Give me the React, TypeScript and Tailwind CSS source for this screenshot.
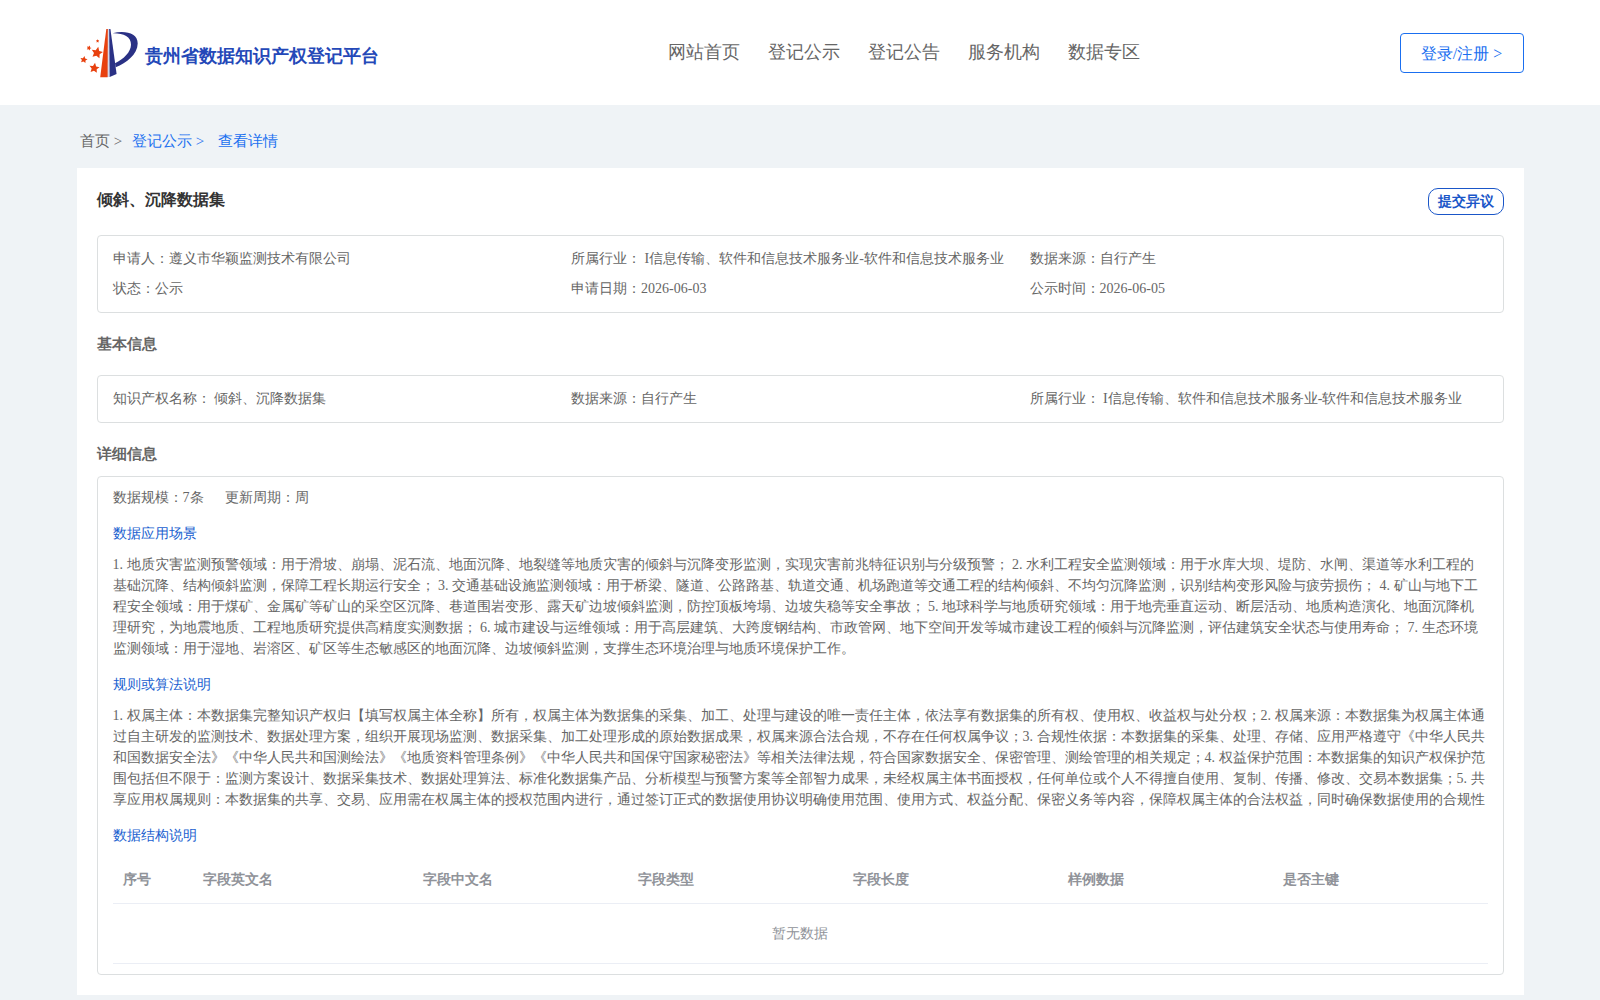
import React from "react";

const navItems = ["网站首页", "登记公示", "登记公告", "服务机构", "数据专区"];

const summary = [
  "申请人：遵义市华颖监测技术有限公司",
  "所属行业： I信息传输、软件和信息技术服务业-软件和信息技术服务业",
  "数据来源：自行产生",
  "状态：公示",
  "申请日期：2026-06-03",
  "公示时间：2026-06-05",
];

const basics = [
  "知识产权名称： 倾斜、沉降数据集",
  "数据来源：自行产生",
  "所属行业： I信息传输、软件和信息技术服务业-软件和信息技术服务业",
];

const sceneLines = [
  "1. 地质灾害监测预警领域：用于滑坡、崩塌、泥石流、地面沉降、地裂缝等地质灾害的倾斜与沉降变形监测，实现灾害前兆特征识别与分级预警； 2. 水利工程安全监测领域：用于水库大坝、堤防、水闸、渠道等水利工程的",
  "基础沉降、结构倾斜监测，保障工程长期运行安全； 3. 交通基础设施监测领域：用于桥梁、隧道、公路路基、轨道交通、机场跑道等交通工程的结构倾斜、不均匀沉降监测，识别结构变形风险与疲劳损伤； 4. 矿山与地下工",
  "程安全领域：用于煤矿、金属矿等矿山的采空区沉降、巷道围岩变形、露天矿边坡倾斜监测，防控顶板垮塌、边坡失稳等安全事故； 5. 地球科学与地质研究领域：用于地壳垂直运动、断层活动、地质构造演化、地面沉降机",
  "理研究，为地震地质、工程地质研究提供高精度实测数据； 6. 城市建设与运维领域：用于高层建筑、大跨度钢结构、市政管网、地下空间开发等城市建设工程的倾斜与沉降监测，评估建筑安全状态与使用寿命； 7. 生态环境",
  "监测领域：用于湿地、岩溶区、矿区等生态敏感区的地面沉降、边坡倾斜监测，支撑生态环境治理与地质环境保护工作。",
];

const ruleLines = [
  "1. 权属主体：本数据集完整知识产权归【填写权属主体全称】所有，权属主体为数据集的采集、加工、处理与建设的唯一责任主体，依法享有数据集的所有权、使用权、收益权与处分权；2. 权属来源：本数据集为权属主体通",
  "过自主研发的监测技术、数据处理方案，组织开展现场监测、数据采集、加工处理形成的原始数据成果，权属来源合法合规，不存在任何权属争议；3. 合规性依据：本数据集的采集、处理、存储、应用严格遵守《中华人民共",
  "和国数据安全法》《中华人民共和国测绘法》《地质资料管理条例》《中华人民共和国保守国家秘密法》等相关法律法规，符合国家数据安全、保密管理、测绘管理的相关规定；4. 权益保护范围：本数据集的知识产权保护范",
  "围包括但不限于：监测方案设计、数据采集技术、数据处理算法、标准化数据集产品、分析模型与预警方案等全部智力成果，未经权属主体书面授权，任何单位或个人不得擅自使用、复制、传播、修改、交易本数据集；5. 共",
  "享应用权属规则：本数据集的共享、交易、应用需在权属主体的授权范围内进行，通过签订正式的数据使用协议明确使用范围、使用方式、权益分配、保密义务等内容，保障权属主体的合法权益，同时确保数据使用的合规性",
];

const columns = ["字段英文名", "字段中文名", "字段类型", "字段长度", "样例数据", "是否主键"];

function Star({ x, y, r, a }: { x: number; y: number; r: number; a: number }) {
  return (
    <path
      transform={`translate(${x} ${y}) rotate(${a}) scale(${r})`}
      d="M0-1 .3-.36 .95-.31 .48.16 .59.81 0 .5-.59.81-.48.16-.95-.31-.3-.36Z"
    />
  );
}

function Logo() {
  return (
    <svg className="h-[50px] w-[60px] shrink-0" viewBox="0 0 60 50">
      <path d="M28 1h3v48h-3Z" fill="#d5d8e8" />
      <g fill="#e8410f">
        <path d="M27.3 1h1.5L28.6 49.2h-7.4Z" />
        <Star x={4.8} y={31.7} r={3.8} a={10} />
        <Star x={10} y={20} r={2.6} a={20} />
        <Star x={18.6} y={13} r={1.8} a={0} />
        <Star x={18} y={24.7} r={6} a={12} />
        <Star x={15.3} y={40.1} r={5.3} a={8} />
      </g>
      <g fill="#2a3185">
        <path d="M30.2 1h1.2L37.6 45.9 30.7 49Z" />
        <path d="M33.5 5.3C46 2.2 58.8 5 58.7 15.6 58.5 26.5 47.5 35 36.7 39.3L36 35.2C45 31 51.8 24 52 16.8 52.2 8.5 44 5 33.5 5.3Z" />
      </g>
    </svg>
  );
}

function Lines({ lines }: { lines: string[] }) {
  return (
    <div className="mt-[10px] whitespace-nowrap">
      {lines.map((l) => (
        <p key={l}>{l}</p>
      ))}
    </div>
  );
}

export default function App() {
  return (
    <div className="h-[1000px] w-[1600px] overflow-hidden bg-[#eff3f6] font-['Liberation_Serif',serif] text-sm leading-[21px] text-[#666]">
      <header className="flex h-[105px] items-start bg-white pr-[76px] pl-[79px]">
        <div className="mt-[28px] flex w-[589px] shrink-0 items-center">
          <Logo />
          <h1 className="ml-[6px] pt-[5px] text-lg font-bold text-[#2448b8]">贵州省数据知识产权登记平台</h1>
        </div>
        <nav className="mt-[38px] flex gap-7 text-lg leading-7 whitespace-nowrap">
          {navItems.map((n) => (
            <a key={n}>{n}</a>
          ))}
        </nav>
        <button className="mt-[33px] ml-auto h-10 w-[124px] rounded border border-[#1a6ff0] pt-[2px] pr-px text-base text-[#1a6ff0]">
          登录/注册 &gt;
        </button>
      </header>

      <div className="flex h-[63px] items-center pt-[9px] pl-20 text-[15px]">
        <span>首页 &gt;</span>
        <span className="ml-[9.7px] text-[#1a70f0]">登记公示 &gt;</span>
        <span className="ml-[14px] text-[#1a70f0]">查看详情</span>
      </div>

      <main className="mx-[76.5px] h-[827px] bg-white px-5 pt-5">
        <div className="flex h-[47px] items-start justify-between">
          <h2 className="text-base leading-6 font-bold text-[#333]">倾斜、沉降数据集</h2>
          <button className="h-[27px] w-[76px] rounded-[10px] border border-[#1a56c8] text-sm font-bold text-[#1a56c8]">
            提交异议
          </button>
        </div>
        <div className="grid h-[78px] grid-cols-[458.6px_458.5px_1fr] content-start gap-y-[9px] rounded border border-[#dcdfe0] pt-3 pl-[15px] whitespace-nowrap">
          {summary.map((s) => (
            <span key={s}>{s}</span>
          ))}
        </div>
        <h3 className="flex h-[62px] items-center text-[15px] font-bold">基本信息</h3>
        <div className="grid h-12 grid-cols-[458.6px_458.5px_1fr] content-start rounded border border-[#dcdfe0] pt-3 pl-[15px] whitespace-nowrap">
          {basics.map((s) => (
            <span key={s}>{s}</span>
          ))}
        </div>
        <h3 className="flex h-[53px] items-center pt-[9px] text-[15px] font-bold">详细信息</h3>
        <section className="h-[499px] rounded border border-[#dcdfe0] px-[15px] pt-[10px]">
          <div className="flex gap-[21px]">
            <span>数据规模：7条</span>
            <span>更新周期：周</span>
          </div>
          <h4 className="mt-[15px] text-[#1a5fd0]">数据应用场景</h4>
          <Lines lines={sceneLines} />
          <h4 className="mt-[15px] text-[#1a5fd0]">规则或算法说明</h4>
          <Lines lines={ruleLines} />
          <h4 className="mt-[15px] text-[#1a5fd0]">数据结构说明</h4>
          <div className="mt-[10px] text-[#909399]">
            <div className="flex h-12 items-center border-b border-[#ebeef5] pl-[10px] font-bold">
              <span className="w-20 shrink-0">序号</span>
              {columns.map((c, i) => (
                <span key={c} className={i === 0 ? "w-[220px] shrink-0" : i === 5 ? "flex-1" : "w-[215px] shrink-0"}>
                  {c}
                </span>
              ))}
            </div>
            <div className="flex h-[60px] items-center justify-center border-b border-[#ebeef5]">暂无数据</div>
          </div>
        </section>
      </main>
    </div>
  );
}
